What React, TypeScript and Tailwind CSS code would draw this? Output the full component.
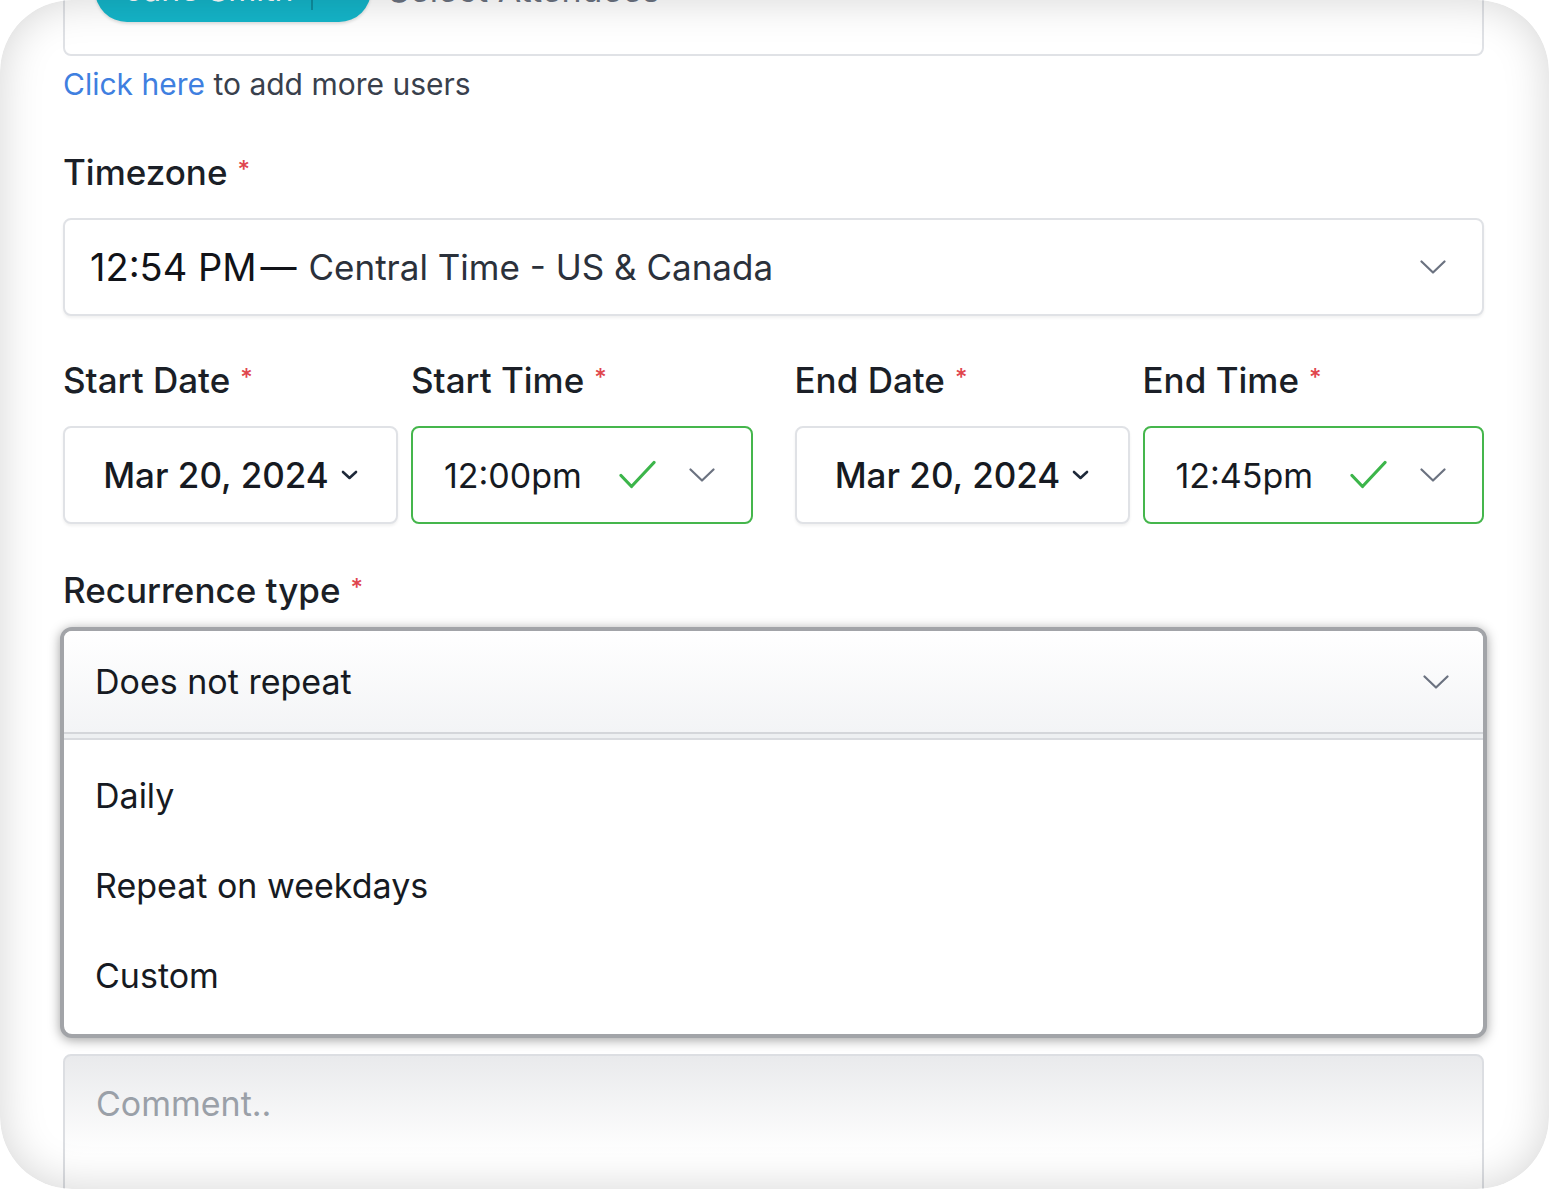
import React from 'react';

const font = { fontFamily: 'Inter, "Noto Sans", "Liberation Sans", sans-serif' };

const Chevron = ({ className = '' }: { className?: string }) => (
  <svg width="26" height="14" viewBox="0 0 26 14" fill="none" className={className}>
    <polyline points="1.5,1.5 13,12.5 24.5,1.5" stroke="currentColor" strokeWidth="2.2" strokeLinecap="round" strokeLinejoin="round" />
  </svg>
);

const SmallChevron = () => (
  <svg width="17" height="10" viewBox="0 0 17 10" fill="none" className="text-gray-800">
    <polyline points="2,2 8.5,8 15,2" stroke="currentColor" strokeWidth="2.6" strokeLinecap="round" strokeLinejoin="round" />
  </svg>
);

const Check = () => (
  <svg width="37" height="30" viewBox="0 0 37 30" fill="none" className="text-[#3cb54a]">
    <polyline points="2,15.5 12.5,26.5 35,2.5" stroke="currentColor" strokeWidth="3.2" strokeLinecap="round" strokeLinejoin="round" />
  </svg>
);

const Label = ({ children }: { children: React.ReactNode }) => (
  <div className="text-[35px] leading-[42px] font-medium text-[#1b1f27] whitespace-nowrap">
    {children}
    <span className="text-[#e0454d] text-[24px] align-top ml-[10px] relative top-[-2px]">*</span>
  </div>
);

const DateBox = ({ value }: { value: string }) => (
  <div className="h-[98px] rounded-[8px] border-2 border-[#e0e2e6] bg-white shadow-[0_2px_3px_rgba(0,0,0,0.06)] flex items-center justify-center gap-[12px]">
    <span className="text-[35px] font-medium text-[#161a22]">{value}</span>
    <SmallChevron />
  </div>
);

const TimeBox = ({ value }: { value: string }) => (
  <div className="h-[98px] rounded-[8px] border-2 border-[#45b64c] bg-white flex items-center pl-[31px] pr-[36px]">
    <span className="text-[34px] text-[#161a22]">{value}</span>
    <div className="ml-auto flex items-center gap-[33px]">
      <Check />
      <Chevron className="text-[#6b7280]" />
    </div>
  </div>
);

export default function App() {
  const options = ['Daily', 'Repeat on weekdays', 'Custom'];

  return (
    <div className="w-full h-screen bg-white" style={font}>
      <div className="relative w-full h-full rounded-[72px] overflow-hidden bg-white">
        <div className="pl-[63px] pr-[65px]">
          {/* attendees */}
          <div className="mt-[-60px] h-[116px] rounded-[8px] border-2 border-[#e0e2e6] bg-white flex items-start pt-[16px] pl-[30px] pr-[38px]">
            <div className="h-[64px] w-[276px] rounded-full bg-[#14b4c8] shadow-[0_2px_3px_rgba(0,0,0,0.12)] flex items-center text-white text-[32px]">
              <span className="pl-[30px] w-[216px]">Jane Smith</span>
              <span className="h-[40px] w-[2px] bg-[#0e8d9e]" />
              <span className="pl-[18px]">×</span>
            </div>
            <span className="ml-[17px] mt-[6px] text-[34px] text-[#6b7280]">Select Attendees</span>
            <Chevron className="ml-auto mt-[18px] text-[#6b7280]" />
          </div>

          <div className="mt-[10px] text-[30px] leading-[36px] text-[#39404c]">
            <span className="text-[#3f7fe0]">Click here</span> to add more users
          </div>

          {/* timezone */}
          <div className="mt-[49px]">
            <Label>Timezone</Label>
          </div>
          <div className="mt-[25px] h-[98px] rounded-[8px] border-2 border-[#e0e2e6] bg-white shadow-[0_2px_3px_rgba(0,0,0,0.06)] flex items-center pl-[25px] pr-[36px]">
            <span className="text-[38px] text-[#111318]">12:54 PM</span>
            <span className="text-[36px] text-[#111318] ml-[4px]">—</span>
            <span className="text-[35px] text-[#2b313b] ml-[12px]">Central Time - US &amp; Canada</span>
            <Chevron className="ml-auto text-[#6b7280]" />
          </div>

          {/* dates */}
          <div className="mt-[43px] flex gap-[42px]">
            <div className="flex-1 flex gap-[13px]">
              <div className="w-[335px]">
                <Label>Start Date</Label>
                <div className="mt-[25px]"><DateBox value="Mar 20, 2024" /></div>
              </div>
              <div className="flex-1">
                <Label>Start Time</Label>
                <div className="mt-[25px]"><TimeBox value="12:00pm" /></div>
              </div>
            </div>
            <div className="flex-1 flex gap-[13px]">
              <div className="w-[335px]">
                <Label>End Date</Label>
                <div className="mt-[25px]"><DateBox value="Mar 20, 2024" /></div>
              </div>
              <div className="flex-1">
                <Label>End Time</Label>
                <div className="mt-[25px]"><TimeBox value="12:45pm" /></div>
              </div>
            </div>
          </div>

          {/* recurrence */}
          <div className="mt-[45px]">
            <Label>Recurrence type</Label>
          </div>
          <div className="mt-[16px] mx-[-3px] rounded-[12px] border-[4px] border-[#a2a4a8] bg-white shadow-[0_2px_12px_rgba(0,0,0,0.38)] overflow-hidden">
            <div className="h-[103px] bg-gradient-to-b from-white to-[#f3f4f6] border-b-2 border-[#d4d6da] flex items-center pl-[31px] pr-[34px]">
              <span className="text-[34px] text-[#161a22]">Does not repeat</span>
              <Chevron className="ml-auto text-[#6b7280]" />
            </div>
            <div className="h-[6px] bg-[#eef0f2] border-b-2 border-[#d9dbdf]" />
            <div className="pt-[10px] pb-[14px]">
              {options.map((o) => (
                <div key={o} className="h-[90px] flex items-center pl-[31px] text-[34px] text-[#161a22]">
                  {o}
                </div>
              ))}
            </div>
          </div>

          {/* comment */}
          <div className="mt-[16px] h-[200px] rounded-[8px] border-2 border-[#dcdee2] bg-[linear-gradient(to_bottom,#e9eaec,#ffffff_100px)] pl-[31px] pt-[28px]">
            <span className="text-[34px] leading-[40px] text-[#9aa0a8]">Comment..</span>
          </div>
        </div>

        {/* screen edge vignette */}
        <div className="pointer-events-none absolute inset-0 rounded-[72px] shadow-[inset_0_0_44px_rgba(0,0,0,0.17)]" />
      </div>
    </div>
  );
}
